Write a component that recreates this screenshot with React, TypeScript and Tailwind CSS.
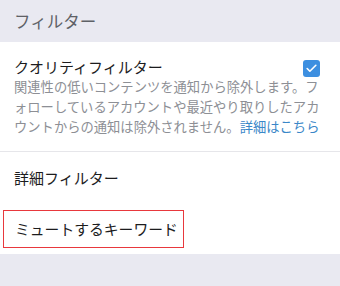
import { Check } from "lucide-react";

const FONT = { fontFamily: '"Noto Sans CJK JP", "Noto Sans", sans-serif' };

export default function App() {
  return (
    <div className="w-[340px] h-[286px] bg-[#e9e9f1] overflow-hidden" style={FONT}>
      {/* section header */}
      <div className="h-[42px] flex items-center px-[14px] text-[16.5px] text-[#5e6166]">
        フィルター
      </div>

      <div className="bg-white">
        {/* quality filter */}
        <div className="pt-[15px] pb-[14px] pl-[14px] pr-[20px]">
          <div className="flex items-start justify-between">
            <span className="text-[15px] leading-[20px] text-[#1c1c1e]">クオリティフィルター</span>
            <span className="mt-[3px] w-[17px] h-[17px] rounded-[3px] bg-[#3d8fe0] flex items-center justify-center">
              <Check className="w-[13px] h-[13px] text-white" strokeWidth={3} />
            </span>
          </div>
          <div className="text-[13.3px] leading-[20px] text-[#8d8f95] whitespace-nowrap">
            <div>関連性の低いコンテンツを通知から除外します。フ</div>
            <div>ォローしているアカウントや最近やり取りしたアカ</div>
            <div>
              ウントからの通知は除外されません。
              <span className="text-[#3a87c8]">詳細はこちら</span>
            </div>
          </div>
        </div>

        <div className="h-px bg-[#e6e6ea]" />

        <div className="h-[52px] flex items-center px-[14px] text-[15px] text-[#1c1c1e]">
          詳細フィルター
        </div>

        <div className="h-[50px] flex items-center pl-[3px]">
          <span className="h-[38px] flex items-center pl-[11px] pr-[5px] border-[1.5px] border-[#e8383d] text-[14.8px] text-[#1c1c1e]">
            ミュートするキーワード
          </span>
        </div>
      </div>
    </div>
  );
}
